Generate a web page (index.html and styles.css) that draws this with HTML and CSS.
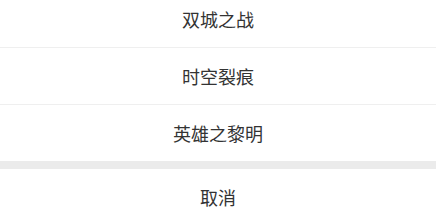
FILE: index.html
```html
<!DOCTYPE html>
<html lang="zh-CN">
<head>
<meta charset="utf-8">
<link rel="stylesheet" href="styles.css">
</head>
<body>
<div class="sheet">
  <div class="options">
    <div class="option">双城之战</div>
    <div class="option">时空裂痕</div>
    <div class="option">英雄之黎明</div>
  </div>
  <div class="gap"></div>
  <div class="option cancel">取消</div>
</div>
</body>
</html>
```
FILE: styles.css
```css
html, body {
  margin: 0;
  padding: 0;
  background: #ffffff;
  overflow: hidden;
}
.sheet {
  margin-top: -9px;
  font-family: "Noto Sans CJK SC", "Noto Sans", sans-serif;
  display: flex;
  flex-direction: column;
}
.options {
  display: flex;
  flex-direction: column;
}
.option {
  height: 56px;
  display: flex;
  align-items: center;
  justify-content: center;
  font-size: 18px;
  color: #333333;
  background: #ffffff;
  border-bottom: 1px solid #efefef;
}
.options .option:last-child {
  border-bottom: none;
}
.gap {
  height: 8px;
  background: #ebebeb;
}
.cancel {
  border-bottom: none;
}
```
